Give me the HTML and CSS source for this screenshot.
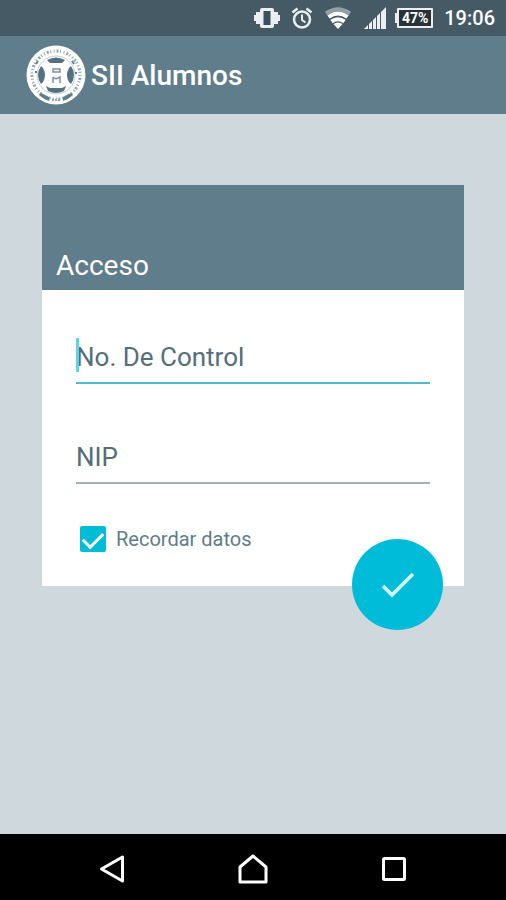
FILE: index.html
```html
<!DOCTYPE html>
<html lang="es">
<head>
    <meta charset="UTF-8">
    <meta name="viewport" content="width=device-width, initial-scale=1.0">
    <title>SII Alumnos</title>
    <link rel="stylesheet" href="styles.css">
</head>
<body>
    <!-- Status Bar -->
    <div class="status-bar">
        <!-- vibrate -->
        <svg width="26" height="22" viewBox="0 0 26 22" fill="#eceff1">
            <rect x="6" y="1" width="14" height="20" rx="2"/>
            <rect x="9.5" y="4" width="7" height="14" fill="#37525e"/>
            <path d="M2 5h4v12H2zM20 5h4v12h-4zM0 8h2v6H0zM24 8h2v6h-2z"/>
        </svg>
        <!-- alarm -->
        <svg width="22" height="22" viewBox="0 0 22 22" fill="none" stroke="#eceff1" stroke-width="2.5">
            <circle cx="11" cy="12.5" r="8"/>
            <path d="M1.5 5.5l5-4M20.5 5.5l-5-4"/>
            <path d="M11 7.5V13l3.5 2.5" stroke-width="2"/>
        </svg>
        <!-- wifi -->
        <svg width="28" height="22" viewBox="0 0 28 22" fill="none" stroke="#fff">
            <path d="M2 6.5Q14-2 26 6.5" stroke="#91a0a7" stroke-width="4"/>
            <path d="M4.5 10q9.5-7 19 0" stroke-width="4"/>
            <path d="M7.5 14.5q6.5-4.500 13 0" stroke-width="4"/>
            <path d="M9.5 17q4.5-3 9 0L14 22z" fill="#fff" stroke="none"/>
        </svg>
        <!-- signal -->
        <svg width="23" height="22" viewBox="0 0 23 22" fill="#eceff1">
            <path d="M1 22l4-4v4zM6 22v-5l3-3v8zM10 22v-9l3-3v12zM14 22V9l3-3v16zM18 22V5l5-5v22z"/>
        </svg>
        <div class="battery">47%</div>
        <time class="clock">19:06</time>
    </div>

    <!-- App Bar -->
    <header class="app-bar">
        <svg width="60" height="60" viewBox="0 0 60 60" fill="none">
            <circle cx="30" cy="30" r="29.5" fill="#fff"/>
            <!-- lettering ring -->
            <circle cx="30" cy="30" r="24" stroke="#8fa3ad" stroke-width="3" stroke-dasharray="1 2 2 1.5 1 2.5"/>
            <circle cx="30" cy="30" r="19" stroke="#c3cfd5" stroke-width="1"/>
            <!-- shield -->
            <path d="M21 15q9-5 18 0l-3 3H24zM15 21q-6 9 0 18l2-2q4-7 0-14zM45 21q6 9 0 18l-2-2q-4-7 0-14zM20 41l4 2h12l4-2-2 5q-8 4-16 0z" fill="#54717f"/>
            <path d="M15 48l8 4v4q-6-2-10-6zM45 48l-8 4v4q6-2 10-6z" fill="#607d8b"/>
            <path d="M26 55h2M29 55h2M32 55h2" stroke="#90a4ae" stroke-width="2"/>
            <path d="M27 24h7v3h-7zM27 32v6M27 32l3 2 4-2v6" stroke="#78909c" stroke-width="1.5"/>
            <path d="M10 19l2-3M46 16l2 3M9 27h2M49 28h2" stroke="#607d8b" stroke-width="2"/>
        </svg>
        <h1>SII Alumnos</h1>
    </header>

    <!-- Login Card -->
    <main class="content">
        <form class="card">
            <div class="card-header">
                <h2>Acceso</h2>
            </div>
            <div class="card-body">
                <div class="field">
                    <span class="cursor"></span>
                    <input class="active" type="text" name="control" placeholder="No. De Control" aria-label="No. De Control">
                </div>
                <div class="field">
                    <input type="password" name="nip" placeholder="NIP" aria-label="NIP">
                </div>
                <div class="remember">
                    <input type="checkbox" id="remember" checked>
                    <label for="remember">Recordar datos</label>
                </div>
            </div>
            <button class="fab" type="submit" aria-label="Entrar">
                <svg width="34" height="26" viewBox="0 0 34 26" fill="none" stroke="#d5fbff" stroke-width="3.5">
                    <path d="M2 14l9 9L32 2"/>
                </svg>
            </button>
        </form>
    </main>

    <!-- Navigation Bar -->
    <nav class="nav-bar">
        <button type="button" aria-label="Atrás">
            <svg width="26" height="30" viewBox="0 0 26 30" fill="none" stroke="#fff" stroke-width="3">
                <path d="M2.5 15l21-12v24z" stroke-linejoin="round"/>
            </svg>
        </button>
        <button type="button" aria-label="Inicio">
            <svg width="30" height="30" viewBox="0 0 30 30" fill="none" stroke="#fff" stroke-width="3">
                <path d="M2 28V13L15 2l13 11v15z" stroke-linejoin="round"/>
            </svg>
        </button>
        <button type="button" aria-label="Recientes">
            <svg width="26" height="26" viewBox="0 0 26 26" fill="none" stroke="#fff" stroke-width="3">
                <rect x="2.5" y="2.5" width="21" height="21" rx="1"/>
            </svg>
        </button>
    </nav>
</body>
</html>
```
FILE: styles.css
```css
/* General Reset */
* {
    margin: 0;
    padding: 0;
    box-sizing: border-box;
}

body {
    font-family: Roboto, "Liberation Sans", sans-serif;
    background-color: #cfd8dc;
    color: #fff;
    display: flex;
    flex-direction: column;
    min-height: 100vh;
}

svg {
    display: block;
    flex-shrink: 0;
}

button {
    border: none;
    cursor: pointer;
}

/* Status Bar */
.status-bar {
    display: flex;
    justify-content: flex-end;
    align-items: center;
    gap: 11px;
    height: 36px;
    padding: 0 11px;
    background-color: #455a64;
}

.battery {
    position: relative;
    width: 36px;
    height: 20px;
    border: 2px solid #eceff1;
    border-radius: 1px;
    background-color: #263238;
    font-size: 14px;
    font-weight: 700;
    line-height: 16px;
    text-align: center;
}

/* battery terminal */
.battery::before {
    content: "";
    position: absolute;
    top: 3px;
    left: -4px;
    width: 3px;
    height: 10px;
    background-color: #eceff1;
}

.clock {
    font-size: 20px;
    font-weight: 500;
}

/* App Bar */
.app-bar {
    display: flex;
    align-items: center;
    gap: 5px;
    height: 78px;
    padding: 0 26px;
    background-color: #607d8b;
}

.app-bar h1 {
    font-size: 28px;
    font-weight: 500;
}

/* Login Card */
.content {
    flex: 1;
    padding: 71px 42px;
}

.card {
    position: relative;
    background-color: #fff;
}

.card-header {
    display: flex;
    align-items: flex-end;
    height: 105px;
    padding: 8px 14px;
    background-color: #607d8b;
}

.card-header h2 {
    font-size: 28px;
    font-weight: 400;
    line-height: 32px;
}

.card-body {
    padding: 42px 34px 34px;
}

.field {
    position: relative;
    margin-bottom: 48px;
}

.field input {
    display: block;
    width: 100%;
    height: 52px;
    border: none;
    border-bottom: 2px solid #a3b1b8;
    background: none;
    color: #546e7a;
    font-family: inherit;
    font-size: 26px;
    outline: none;
}

.field input.active {
    border-bottom-color: #4fb9cd;
}

.field input::placeholder {
    color: #546e7a;
    opacity: 1;
}

/* text cursor of the active field */
.cursor {
    position: absolute;
    top: 6px;
    left: 0;
    width: 3px;
    height: 34px;
    background-color: #5fd3e2;
}

.remember {
    display: flex;
    align-items: center;
    gap: 10px;
    height: 26px;
    margin-top: -6px;
    padding-left: 4px;
    color: #607d8b;
    font-size: 20px;
}

.remember input {
    appearance: none;
    display: flex;
    justify-content: center;
    width: 26px;
    height: 26px;
    border-radius: 2px;
    background-color: #00bcd4;
}

.remember input:checked::after {
    content: "";
    width: 9px;
    height: 17px;
    margin-top: 2px;
    border: solid #fff;
    border-width: 0 3px 3px 0;
    transform: rotate(45deg);
}

.fab {
    position: absolute;
    right: 21px;
    bottom: -44px;
    display: flex;
    justify-content: center;
    align-items: center;
    width: 91px;
    height: 91px;
    border-radius: 50%;
    background-color: #00bcd9;
}

/* Navigation Bar */
.nav-bar {
    display: grid;
    grid-template-columns: repeat(3, 1fr);
    height: 66px;
    padding: 4px 42px 0;
    background-color: #000;
}

.nav-bar button {
    display: flex;
    justify-content: center;
    align-items: center;
    background: none;
}
```
